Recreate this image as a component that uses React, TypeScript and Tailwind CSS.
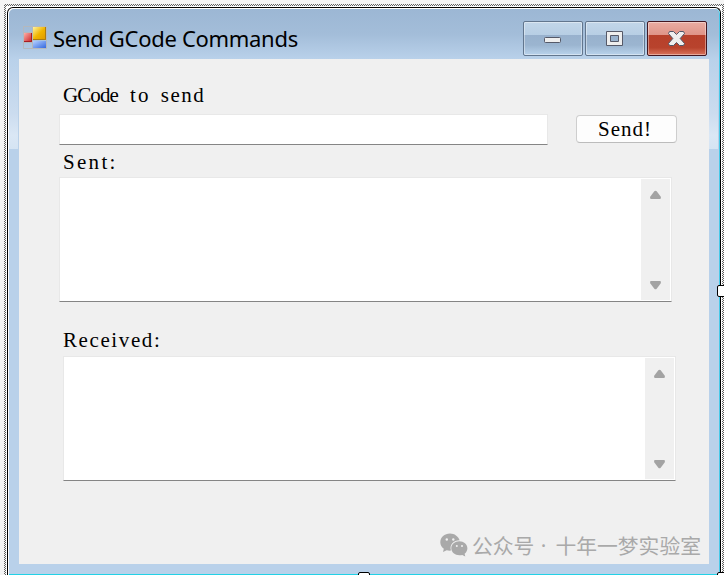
import React from "react";

type Word = { text: string; track: string };

function Label({ words }: { words: Word[] }) {
  return (
    <span className="flex gap-[10px] whitespace-nowrap font-['Liberation_Serif','Noto_Sans_CJK_SC',serif] text-[21px] leading-[24px] text-black">
      {words.map((w) => (
        <span key={w.text} className={w.track}>{w.text}</span>
      ))}
    </span>
  );
}

function Arrow({ down = false }: { down?: boolean }) {
  return (
    <svg width="13" height="10" viewBox="0 0 13 10" className={down ? "rotate-180" : ""}>
      <path d="M5.3 1.300Q6.500 0 7.700 1.300L11.600 6.600Q12.600 9 10.800 9H2.200Q.4 9 1.400 6.600Z" fill="#a3a3a3" />
    </svg>
  );
}

function TextArea() {
  return (
    <div className="flex h-[125px] w-[613px] justify-end border border-[#e8e8e8] border-b-[#858585] bg-white pt-px pr-px pb-px">
      <div className="flex w-[29px] flex-col items-center justify-between bg-[#f0f0f0] pt-[11px] pb-[10px]">
        <Arrow />
        <Arrow down />
      </div>
    </div>
  );
}

function CaptionButton({ close = false, children }: { close?: boolean; children: React.ReactNode }) {
  const tone = close
    ? "border-[#431620] bg-[linear-gradient(#e9aca2_0%,#df9488_39%,#b7402b_40%,#b8432d_78%,#d9735c_100%)]"
    : "border-[#62768e] bg-[linear-gradient(#c2d6e9_0%,#b7cee4_39%,#98b1cd_40%,#9bb5d0_70%,#b9d3ec_100%)]";
  return (
    <div className={`flex h-[35px] w-[60px] items-center justify-center rounded-[2px] border shadow-[inset_0_0_0_1px_rgba(255,255,255,0.4)] ${tone}`}>
      {children}
    </div>
  );
}

function AppIcon() {
  return (
    <svg width="24" height="24" viewBox="0 0 24 24">
      <defs>
        <linearGradient id="gold" x2="1" y2="1"><stop stopColor="#fff3a0" /><stop offset=".5" stopColor="#f0b400" /><stop offset="1" stopColor="#dc9600" /></linearGradient>
        <linearGradient id="blue" x2="1" y2="1"><stop stopColor="#b4d0ff" /><stop offset="1" stopColor="#3468df" /></linearGradient>
        <linearGradient id="red" x2="1" y2="1"><stop stopColor="#ffb0a8" /><stop offset="1" stopColor="#c81c20" /></linearGradient>
      </defs>
      <path d="M.5 .5H23.5V22.5H.5ZM9.5 .5V22.5M.5 6.5H9.5M.5 16.5H9.5" fill="none" stroke="#b4b8bd" />
      <rect x="10" y="1" width="13" height="13" fill="url(#gold)" />
      <path d="M10 13.5H22.5V1" fill="none" stroke="#a97b13" />
      <rect x="10" y="15" width="13" height="7" fill="url(#blue)" />
      <rect x="1" y="7" width="8" height="9" fill="url(#red)" />
      <path d="M1 15.5H8.5V7" fill="none" stroke="#a61c22" />
    </svg>
  );
}

function WeChat() {
  return (
    <svg width="28" height="24" viewBox="0 0 28 24" fill="#a9a9a9">
      <path d="M10 .5C4.500 .5 .3 4.400.3 9.200c0 2.700 1.400 5 3.500 6.500L3 19l3.700-1.800c1.300.4 2.700.6 4.300.4C9.200 12 13.500 7.300 19.600 7.300 18.300 3.300 14.500 .5 10 .5Z" />
      <path d="M19.400 8.300c-4.500 0-8.100 3.100-8.100 7s3.600 7 8.100 7c1.100 0 2-.2 2.900-.4l3 1.700-.7-2.800c1.700-1.300 2.800-3.300 2.800-5.500 0-3.900-3.600-7-8-7Z" />
      <g fill="#f0f0f0"><circle cx="6.800" cy="6.500" r="1.200" /><circle cx="13.300" cy="6.500" r="1.200" /><circle cx="16.800" cy="13" r="1" /><circle cx="22" cy="13" r="1" /></g>
    </svg>
  );
}

function Edge() {
  return (
    <div className="w-[10px] shrink-0">
      <div className="h-[90px] border-r border-[#bad1e9] bg-[linear-gradient(#b9d1ea,#cbdcef_60%,#dae7f5_85%,#d5e4f3)]" />
    </div>
  );
}

export default function App() {
  return (
    <div className="relative h-[575px] w-[724px] overflow-hidden bg-[#f4f4f4] pt-1 pl-1">
      <div className="h-[580px] w-[720px] bg-[conic-gradient(#606060_25%,#f4f4f4_0_50%,#606060_0_75%,#f4f4f4_0)] bg-[size:2px_2px] pt-[2px] pl-[2px]">
        <div className="h-[580px] w-[716px] bg-white pt-px pl-px">
          <div className="h-[568px] w-[714px] rounded-t-[6px] border border-b-0 border-black bg-white pt-px pl-px">
            <div className="flex h-[566px] w-[711px] flex-col rounded-t-[5px] border-r border-b border-r-[#47c9e8] border-b-[#22d1e6] bg-[linear-gradient(#9cb7d4_0px,#a3bdd9_25px,#b9d1ea_50px)]">
              <div className="flex h-[50px] shrink-0 justify-between pt-3 pl-[14px]">
                <div className="flex pt-[5px]">
                  <AppIcon />
                  <span className="ml-[6px] -mt-[3px] whitespace-nowrap font-['Noto_Sans','Open_Sans',sans-serif] text-[22px] leading-[30px] tracking-[-0.3px] text-black">Send GCode Commands</span>
                </div>
                <div className="flex gap-[2px] pr-3">
                  <CaptionButton><svg width="18" height="8" className="mt-[2px]"><rect x=".5" y="1.500" width="16" height="5" rx="1" fill="#eee" stroke="#555968" /></svg></CaptionButton>
                  <CaptionButton>
                    <svg width="18" height="15"><path fillRule="evenodd" d="M.5 .5h16v14H.5ZM4.500 4.500v6h8v-6Z" fill="#eee" stroke="#555968" /></svg>
                  </CaptionButton>
                  <CaptionButton close>
                    <svg width="18" height="15"><path d="M1.500 .5H5.500L8.500 3.500 11.500 .5H15.500L16.500 2.500 12.200 7.500 16.500 12.500 15.500 14.500H11.500L8.500 11.500 5.500 14.500H1.500L.5 12.500 4.800 7.500 .5 2.500Z" fill="#eee" stroke="#505668" strokeLinejoin="round" /></svg>
                  </CaptionButton>
                </div>
              </div>
              <div className="flex h-[505px] shrink-0">
                <Edge />
                <main className="flex w-[690px] flex-col bg-[#f0f0f0] pt-6">
                  <div className="h-[31px] pl-[44px]"><Label words={[{ text: "GCode", track: "tracking-[-0.9px] mr-[2px]" }, { text: "to", track: "tracking-[2.2px]" }, { text: "send", track: "tracking-[1.5px]" }]} /></div>
                  <div className="flex h-[34px] pl-[40px]">
                    <input className="h-[31px] w-[489px] border border-[#e8e8e8] border-b-[#858585] bg-white outline-none" />
                    <button className="mt-px ml-[28px] flex h-[28px] w-[101px] items-center rounded-[4px] border border-[#cecece] border-b-[#bcbcbc] bg-[#fdfdfd] pl-[21px]">
                      <Label words={[{ text: "Send!", track: "tracking-[1px]" }]} />
                    </button>
                  </div>
                  <div className="h-[29px] pt-[2px] pl-[44px]"><Label words={[{ text: "Sent:", track: "tracking-[2.3px]" }]} /></div>
                  <div className="pl-[40px]"><TextArea /></div>
                  <div className="h-[54px] pt-[26px] pl-[44px]"><Label words={[{ text: "Received:", track: "tracking-[1.6px]" }]} /></div>
                  <div className="pl-[44px]"><TextArea /></div>
                  <div className="mt-[50px] flex items-center justify-end pr-[8px]">
                    <WeChat />
                    <span className="ml-[4px] flex whitespace-nowrap font-['Noto_Sans_CJK_SC',sans-serif] text-[20.800px] leading-[28px] text-[#a9a9a9]">
                      <span>公众号</span>
                      <span className="w-[21px] pr-[3px] text-center font-['Noto_Sans',sans-serif]">·</span>
                      <span>十年一梦实验室</span>
                    </span>
                  </div>
                </main>
                <Edge />
              </div>
            </div>
          </div>
        </div>
      </div>
      <div className="absolute top-[6px] left-[721px] h-[569px] w-px bg-white" />
      <div className="absolute top-[285px] left-[717px] h-3 w-3 rounded-[2px] border border-black bg-white" />
      <div className="absolute top-[572px] left-[358px] h-3 w-3 rounded-[2px] border border-black bg-white" />
      <div className="absolute top-[572px] left-[717px] h-3 w-3 rounded-[2px] border border-black bg-white" />
    </div>
  );
}
